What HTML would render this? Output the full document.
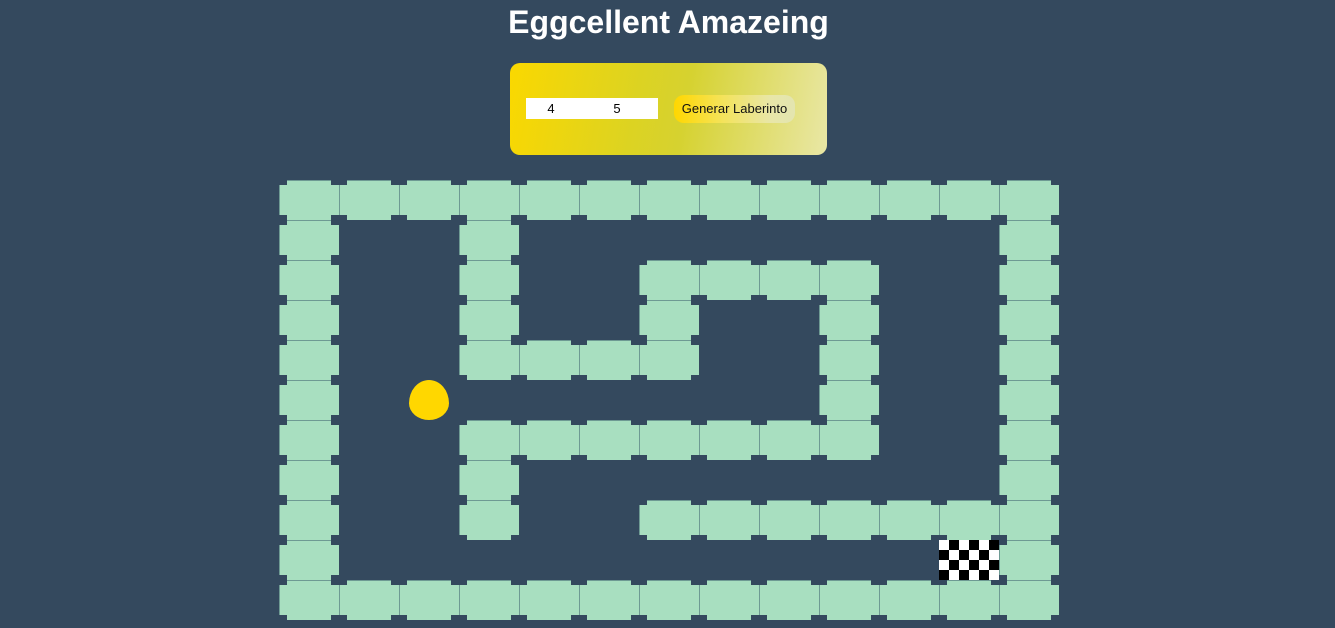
<!DOCTYPE html>
<html><head><style>
body{margin:0;width:1335px;height:628px;background:#34495e;overflow:hidden;font-family:"Liberation Sans",Arial,sans-serif;position:relative}
h1{position:absolute;top:4px;left:0;width:1337px;text-align:center;margin:0;color:#fff;font-size:32px;font-weight:bold}
.panel{position:absolute;left:510px;top:63px;width:317px;height:92px;border-radius:10px;background:linear-gradient(100deg,#fad800 0%,#dcd322 40%,#d6d230 55%,#e9e7a6 100%)}
.bar{position:absolute;left:16px;top:35px;width:132px;height:21px;background:#fff}
.n{position:absolute;top:35px;font-size:13px;line-height:21px;color:#000;width:20px;text-align:center}
.btn{position:absolute;left:164px;top:32px;width:121px;height:28px;border-radius:10px;background:linear-gradient(90deg,#ffd700,#f4e35a 40%,#e8e6a8 80%,#e3e5b0);font-size:13px;line-height:28px;text-align:center;color:#111}
.t{position:absolute;width:59px;height:39px;background:#a8dfc0;border-left:1px solid #6e9a93;border-top:1px solid #6e9a93}
.t::before{content:"";position:absolute;width:8px;height:5px;background:#34495e;left:-1px;top:-1px;box-shadow:52px 0 0 #34495e,0 35px 0 #34495e,52px 35px 0 #34495e}
.egg{position:absolute;left:409px;top:380px;width:40px;height:40px;background:#ffd700;border-radius:50% 50% 50% 50%/58% 58% 42% 42%}
.fin{position:absolute;left:939px;top:540px;width:60px;height:40px}
.fin i{position:absolute;width:10px;height:10px;background:#000}
</style></head><body>
<h1>Eggcellent Amazeing</h1>
<div class="panel">
<div class="bar"></div>
<div class="n" style="left:31px">4</div>
<div class="n" style="left:97px">5</div>
<div class="btn">Generar Laberinto</div>
</div>
<div id="m"></div>
<div class="egg"></div>
<div class="fin" id="f" style="background:#fff"></div>
<script>
var rows={0:[0,1,2,3,4,5,6,7,8,9,10,11,12],1:[0,3,12],2:[0,3,6,7,8,9,12],3:[0,3,6,9,12],4:[0,3,4,5,6,9,12],5:[0,9,12],6:[0,3,4,5,6,7,8,9,12],7:[0,3,12],8:[0,3,6,7,8,9,10,11,12],9:[0,12],10:[0,1,2,3,4,5,6,7,8,9,10,11,12]};
var h='';for(var r in rows){rows[r].forEach(function(c){h+='<div class="t" style="left:'+(279+60*c)+'px;top:'+(180+40*r)+'px"></div>';});}
document.getElementById('m').innerHTML=h;
var f='';for(var y=0;y<4;y++)for(var x=0;x<6;x++)if((x+y)%2==1)f+='<i style="left:'+(x*10)+'px;top:'+(y*10)+'px"></i>';
document.getElementById('f').innerHTML=f;
</script>
</body></html>
